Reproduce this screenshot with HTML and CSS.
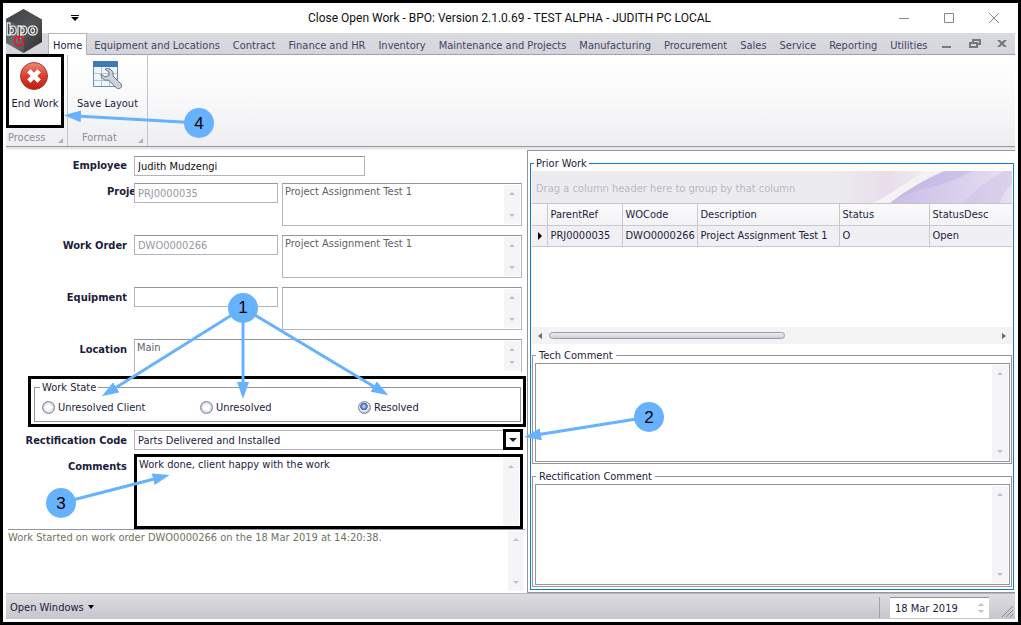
FILE: index.html
```html
<!DOCTYPE html>
<html lang="en">
<head>
<meta charset="utf-8">
<title>Close Open Work</title>
<link rel="stylesheet" href="styles.css">
</head>
<body>
<div class="window">
  <header class="titlebar">
    <button class="quick" aria-label="Customize toolbar"><svg width="8" height="6" viewBox="0 0 8 6"><path d="M0 0h8v1H0zM0 2h8L4 6z"/></svg></button>
    <h1 class="title">Close Open Work - BPO: Version 2.1.0.69 - TEST ALPHA - JUDITH PC LOCAL</h1>
    <div class="caption-buttons">
      <button aria-label="Minimize"><svg width="12" height="12" viewBox="0 0 12 12"><path d="M1 6.500h10"/></svg></button>
      <button aria-label="Maximize"><svg width="12" height="12" viewBox="0 0 12 12"><path d="M1.500 1.500h9v9h-9z"/></svg></button>
      <button aria-label="Close"><svg width="12" height="12" viewBox="0 0 12 12"><path d="M1 1l10 10M11 1L1 11"/></svg></button>
    </div>
  </header>
  <svg class="logo" width="38" height="44" viewBox="0 0 38 44" role="img" aria-label="bpo">
    <defs><linearGradient id="hex" x1="0" y1="0" x2="1" y2="1"><stop offset="0" stop-color="#4a4c4e"/><stop offset=".5" stop-color="#6c6f71"/><stop offset="1" stop-color="#303234"/></linearGradient></defs>
    <path d="M17.500 0L36 10.500V33L17.500 44 0 34V10z" fill="url(#hex)"/>
    <path d="M17.500 0L36 10.500 18 20 0 10z" fill="#2f3133" opacity=".45"/>
    <path d="M18 20v24L36 33V10.500z" fill="#222" opacity=".3"/>
    <text x="0" y="26" class="logo-text">bpo</text>
    <circle cx="13" cy="32" r="4.500" fill="none" stroke="#d3202c" stroke-width="2"/>
    <path d="M13 32v-4" stroke="#d3202c" stroke-width="2"/>
  </svg>
  <nav class="tabs">
    <button class="tab active">Home</button>
    <button class="tab">Equipment and Locations</button>
    <button class="tab">Contract</button>
    <button class="tab">Finance and HR</button>
    <button class="tab">Inventory</button>
    <button class="tab">Maintenance and Projects</button>
    <button class="tab">Manufacturing</button>
    <button class="tab">Procurement</button>
    <button class="tab">Sales</button>
    <button class="tab">Service</button>
    <button class="tab">Reporting</button>
    <button class="tab">Utilities</button>
    <div class="child-buttons">
      <button aria-label="Minimize child"><svg width="12" height="10" viewBox="0 0 12 10"><path d="M1 7h9v2H1z"/></svg></button>
      <button aria-label="Restore child"><svg width="12" height="10" viewBox="0 0 12 10"><path fill-rule="evenodd" d="M3 0h9v6H9v3H0V3h3zM5 2v1h4v1h1V2zM2 5v2h5V5z"/></svg></button>
      <button aria-label="Close child"><svg width="10" height="10" viewBox="0 0 10 10"><path d="M0 1h3l2 2 2-2h3L6.500 4.500 10 8H7L5 6 3 8H0l3.500-3.500z"/></svg></button>
    </div>
  </nav>
  <section class="ribbon">
    <div class="group">
      <button class="command marked">
        <svg width="32" height="32" viewBox="0 0 32 32">
          <defs><linearGradient id="red" x1="0" y1="0" x2="0" y2="1"><stop offset="0" stop-color="#ee8a78"/><stop offset=".5" stop-color="#d9402c"/><stop offset="1" stop-color="#c01c14"/></linearGradient></defs>
          <circle cx="15" cy="16" r="13.500" fill="url(#red)" stroke="#a83a34"/>
          <path d="M11.500 9.500L15 13l3.500-3.500 3 3L18 16l3.500 3.500-3 3L15 19l-3.500 3.500-3-3L12 16l-3.500-3.500z" fill="#fff" stroke="#f6dcd8" stroke-linejoin="round"/>
        </svg>
        <span>End Work</span>
      </button>
      <div class="group-name">Process<svg width="5" height="5" viewBox="0 0 5 5"><path d="M5 0v5H0z"/></svg></div>
    </div>
    <div class="group wide">
      <button class="command">
        <svg width="32" height="32" viewBox="0 0 32 32">
          <path d="M1.500 1.500h24v25h-24z" fill="#eef5fb" stroke="#6d8cab"/>
          <path d="M1 1h25v6H1z" fill="#3e7ab8"/>
          <path d="M2 13.500h23M2 20.500h23M9.500 7v19M17.500 7v19" stroke="#a9c8e4"/>
          <path d="M13 9c5-1.500 9 2 8 7l8 8c2 3-1.500 6-4.500 4l-8-8c-4 1-7.500-1.500-7.500-6l4 3 4-1.500V12z" fill="#cdd3dc" stroke="#667080" stroke-linejoin="round"/>
        </svg>
        <span>Save Layout</span>
      </button>
      <div class="group-name">Format<svg width="5" height="5" viewBox="0 0 5 5"><path d="M5 0v5H0z"/></svg></div>
    </div>
  </section>
  <main class="workspace">
    <form class="form">
      <div class="row short"><label for="emp">Employee</label><input id="emp" class="employee" value="Judith Mudzengi"></div>
      <div class="row"><label for="proj" class="cut">Project</label><input id="proj" class="code" value="PRJ0000035" readonly>
        <div class="memo"><textarea aria-label="Project description" readonly>Project Assignment Test 1</textarea><i class="scroll"></i></div></div>
      <div class="row"><label for="wo">Work Order</label><input id="wo" class="code" value="DWO0000266" readonly>
        <div class="memo"><textarea aria-label="Work order description" readonly>Project Assignment Test 1</textarea><i class="scroll"></i></div></div>
      <div class="row"><label for="eq">Equipment</label><input id="eq" class="code" readonly>
        <div class="memo"><textarea aria-label="Equipment description" readonly></textarea><i class="scroll"></i></div></div>
      <div class="row location"><label for="loc">Location</label>
        <div class="memo"><textarea id="loc" readonly>Main</textarea><i class="scroll"></i></div></div>
      <div class="state-mark">
        <fieldset class="state">
          <legend>Work State</legend>
          <label><input type="radio" name="state">Unresolved Client</label>
          <label><input type="radio" name="state">Unresolved</label>
          <label><input type="radio" name="state" checked>Resolved</label>
        </fieldset>
      </div>
      <div class="row rect"><label for="rc">Rectification Code</label>
        <div class="combo"><select id="rc"><option>Parts Delivered and Installed</option></select><span class="drop"></span></div></div>
      <div class="row comments"><label for="com">Comments</label>
        <div class="memo marked"><textarea id="com">Work done, client happy with the work</textarea><i class="scroll top-only"></i></div></div>
      <div class="log"><p>Work Started on work order DWO0000266 on the 18 Mar 2019 at 14:20:38.</p><i class="scroll"></i></div>
    </form>
    <section class="side">
      <fieldset class="prior">
        <legend>Prior Work</legend>
        <div class="group-panel"><span>Drag a column header here to group by that column</span>
          <svg width="180" height="32" viewBox="0 0 180 32" preserveAspectRatio="none">
            <defs><linearGradient id="pink" x1="0" x2="1"><stop offset="0" stop-color="#ececf0"/><stop offset=".6" stop-color="#e8dde9"/><stop offset="1" stop-color="#ececf0"/></linearGradient>
            <linearGradient id="vio" x1="0" x2="1"><stop offset="0" stop-color="#c9bde6"/><stop offset=".6" stop-color="#d9d1ee"/><stop offset="1" stop-color="#e6e2f0"/></linearGradient></defs>
            <path d="M0 0h92Q70 16 42 32H0z" fill="url(#pink)"/>
            <path d="M92 0h18Q80 14 58 32H42Q70 16 92 0z" fill="#f3f3f5"/>
            <path d="M112 0h68v32H58Q84 12 112 0z" fill="url(#vio)"/>
            <path d="M100 16Q128 8 140 0h-26Q84 12 58 32 78 20 100 16z" fill="#b8a9df" opacity=".35"/>
            <path d="M130 32Q150 12 172 0h8v12Q172 22 168 32z" fill="#cdb9e4" opacity=".4"/>
          </svg>
        </div>
        <div class="grid">
          <table>
            <colgroup><col class="c-ind"><col class="c-code"><col class="c-code"><col class="c-desc"><col class="c-stat"><col></colgroup>
            <thead><tr><th></th><th>ParentRef</th><th>WOCode</th><th>Description</th><th>Status</th><th>StatusDesc</th></tr></thead>
            <tbody><tr><td><svg width="4" height="8" viewBox="0 0 4 8"><path d="M0 0l4 4-4 4z"/></svg></td><td>PRJ0000035</td><td>DWO0000266</td><td>Project Assignment Test 1</td><td>O</td><td>Open</td></tr></tbody>
          </table>
        </div>
        <div class="hscroll"><svg width="4" height="6" viewBox="0 0 4 6"><path d="M4 0v6L0 3z"/></svg><div class="track"><div class="thumb"></div></div><svg width="4" height="6" viewBox="0 0 4 6"><path d="M0 0v6l4-3z"/></svg></div>
        <fieldset class="note"><legend>Tech Comment</legend><div class="memo"><textarea aria-label="Tech Comment"></textarea><i class="scroll"></i></div></fieldset>
        <fieldset class="note"><legend>Rectification Comment</legend><div class="memo"><textarea aria-label="Rectification Comment"></textarea><i class="scroll"></i></div></fieldset>
      </fieldset>
    </section>
  </main>
  <footer class="statusbar">
    <button class="open-windows">Open Windows<svg width="6" height="4" viewBox="0 0 6 4"><path d="M0 0h6L3 4z"/></svg></button>
    <div class="date"><input aria-label="Date" value="18 Mar 2019"><i class="scroll"></i></div>
    <svg class="grip" width="13" height="13" viewBox="0 0 13 13"><path d="M1 12L12 1M5 12l7-7M9 12l3-3" fill="none" stroke="#8c8c94"/></svg>
  </footer>
  <svg class="callouts" width="1021" height="625" viewBox="0 0 1021 625">
    <defs><marker id="head" markerUnits="userSpaceOnUse" markerWidth="17" markerHeight="12" refX="5" refY="6" orient="auto"><path d="M0 0l17 6-17 6z" fill="#66b2ff"/></marker></defs>
    <g stroke="#66b2ff" stroke-width="3" marker-end="url(#head)">
      <path d="M243 308L112 390"/><path d="M243 308V387"/><path d="M243 308L378 389"/>
      <path d="M649 417L536 435"/><path d="M61 503L158 478"/><path d="M199 123L76 116"/>
    </g>
    <g fill="#66b2ff"><circle cx="243" cy="308" r="15"/><circle cx="649" cy="417" r="15"/><circle cx="61" cy="503" r="15"/><circle cx="199" cy="123" r="15"/></g>
    <g class="numbers"><text x="243" y="313">1</text><text x="649" y="423">2</text><text x="61" y="509">3</text><text x="199" y="129">4</text></g>
  </svg>
</div>
</body>
</html>
```
FILE: styles.css
```css
* { box-sizing: border-box; }
body {
  margin: 0;
  font: 11px/15px "DejaVu Sans Condensed", Tahoma, sans-serif;
  color: #1c1c3c;
}
button, input, textarea, select {
  font: inherit;
  color: inherit;
  margin: 0;
  padding: 0;
  border: 0;
  border-radius: 0;
  background: none;
  outline: 0;
}
fieldset { margin: 0; padding: 0; min-width: 0; }
svg { display: block; }

.window {
  position: relative;
  display: flex;
  flex-direction: column;
  min-height: 100vh;
  padding: 0 3px 3px;
  border: 3px solid #000;
  background: #fff;
}

.titlebar { display: flex; align-items: center; height: 30px; }
.quick { margin-left: 65px; }
.title {
  flex: 1;
  margin: 0;
  padding-left: 42px;
  text-align: center;
  font: 12px/18px Roboto, sans-serif;
  color: #111;
}
.caption-buttons { display: flex; gap: 33px; padding-right: 15px; }
.caption-buttons path { fill: none; stroke: #888; }

.logo { position: absolute; left: 3px; top: 6px; }
.logo-text {
  font: bold 15px "DejaVu Sans", sans-serif;
  fill: #333;
  stroke: #fff;
  stroke-width: 1;
}

.tabs {
  display: flex;
  gap: 1px;
  height: 22px;
  padding-left: 42px;
  background: linear-gradient(#dadae1, #d4d4dc);
  border-bottom: 1px solid #a2a2ac;
}
.tab { padding: 3px 6px 0; color: #45455e; white-space: nowrap; }
.tab.active {
  height: 22px;
  padding: 2px 4px 0;
  background: #fff;
  border: 1px solid #b4b4bc;
  border-bottom: 0;
  color: #1c1c3c;
}
.child-buttons {
  display: flex;
  align-items: center;
  gap: 16px;
  margin-left: auto;
  padding-right: 8px;
  fill: #77777f;
}

.ribbon {
  display: flex;
  height: 95px;
  background: linear-gradient(#fff 0, #fafafb 40%, #eeeef2 91px, #9a9a9e 91px, #9a9a9e 92px, #dedee2 92px, #f4f4f4);
}
.group {
  display: flex;
  flex-direction: column;
  width: 62px;
  height: 91px;
  border-right: 1px solid #c4c4cc;
}
.group.wide { width: 80px; }
.command {
  display: flex;
  flex: 1;
  flex-direction: column;
  align-items: center;
  gap: 4px;
  padding-top: 5px;
  white-space: nowrap;
}
.command.marked {
  width: 58px;
  margin-top: -1px;
  padding-top: 3px;
  border: 3px solid #000;
  background: #fff;
}
.group-name {
  display: flex;
  align-items: center;
  justify-content: space-between;
  height: 18px;
  padding: 1px 4px 0 2px;
  color: #8d8d9b;
}
.group-name svg { align-self: flex-end; margin-bottom: 3px; fill: #b0b0b8; }
.wide .group-name { padding-left: 14px; }

.workspace {
  flex: 1;
  display: grid;
  grid-template-columns: 521px 1fr;
}
.form { display: flex; flex-direction: column; padding-top: 6px; }
.row { display: flex; align-items: flex-start; height: 43px; margin-bottom: 9px; }
.row.short { height: 20px; margin-bottom: 7px; }
.row > label {
  width: 128px;
  padding-right: 7px;
  text-align: right;
  font-weight: bold;
  line-height: 21px;
  white-space: nowrap;
}
.row.short > label { line-height: 19px; }
.row > label.cut {
  padding: 0 0 0 101px;
  text-align: left;
  line-height: 17px;
}
.row > input {
  position: relative;
  height: 20px;
  padding: 1px 3px 0;
  background: #fff;
  border: 1px solid #b4b4bc;
  border-top-color: #94949c;
}
.employee { width: 231px; color: #111; }
.code { width: 144px; margin-right: 4px; color: #9797a0; }

.memo {
  position: relative;
  display: flex;
  flex: 1;
  height: 100%;
  margin-right: 5px;
  border: 1px solid #b4b4bc;
  border-top-color: #94949c;
}
.memo textarea {
  flex: 1;
  min-width: 0;
  padding: 0 2px;
  resize: none;
  overflow: hidden;
  color: #5f5f66;
}
.scroll {
  display: flex;
  flex-direction: column;
  justify-content: space-between;
  align-items: center;
  width: 16px;
  padding: 7px 0;
  margin: 1px;
  background: #f5f5f8;
}
.scroll::before, .scroll::after {
  content: "";
  border: 3px solid transparent;
  border-top-width: 0;
  border-bottom: 3px solid #c0c0c8;
}
.scroll::after {
  border-top: 3px solid #c0c0c8;
  border-bottom-width: 0;
}
.scroll.top-only::after { display: none; }

.location { height: 33px; margin-bottom: 4px; }
.location .memo { border-bottom: 0; }

.state-mark {
  width: 498px;
  height: 51px;
  margin: 0 0 3px 22px;
  padding: 1px 2px 3px 3px;
  border: 3px solid #000;
}
.state {
  height: 42px;
  display: grid;
  grid-template-columns: 158px 158px 1fr;
  align-items: center;
  padding: 0 0 2px 7px;
  border: 1px solid #94949c;
}
.state legend { margin-left: -2px; padding: 0 2px; }
.state label { display: flex; align-items: center; gap: 3px; }
.state input {
  appearance: none;
  width: 13px;
  height: 13px;
  border: 1px solid #85858d;
  border-radius: 50%;
  background: radial-gradient(#fff 35%, #c4c4d0 75%);
}
.state input:checked {
  background: radial-gradient(circle at 45% 40%, #b4ccf4 8%, #3a5cae 38%, #eef 46%, #b8b8c8 75%);
}

.row.rect { height: 20px; margin-bottom: 4px; }
.combo { position: relative; flex: 1; height: 20px; margin-right: 5px; border: 1px solid #b4b4bc; }
.combo select { appearance: none; width: 100%; height: 18px; padding: 1px 3px 0; }
.drop {
  position: absolute;
  right: -2px;
  top: -2px;
  width: 20px;
  height: 21px;
  display: grid;
  place-items: center;
  border: 3px solid #000;
  background: #fff;
  pointer-events: none;
}
.drop::after {
  content: "";
  border: 4px solid transparent;
  border-top: 4px solid #222;
  border-bottom: 0;
}
.row.comments { height: 75px; margin: 0; }
.row.comments > label { line-height: 25px; }
.memo.marked { margin-right: 4px; border: 3px solid #000; }
.memo.marked textarea { padding: 0 2px; color: #1c1c3c; }
.log {
  display: flex;
  flex: 1;
  margin: 0 2px 1px;
  border-top: 1px solid #94949c;
}
.log p { flex: 1; margin: 0; color: #6d7564; white-space: nowrap; }

.side {
  display: flex;
  padding: 5px 1px 2px 2px;
  border: 1px solid #94949c;
  border-right: 0;
}
.prior {
  flex: 1;
  display: flex;
  flex-direction: column;
  padding: 0 1px 2px;
  border: 1px solid #1677d2;
}
.prior > legend { margin-left: 2px; padding: 0 2px; }
.group-panel {
  display: flex;
  align-items: center;
  justify-content: space-between;
  height: 33px;
  background: #ececf0;
  border-bottom: 1px solid #c4c4cc;
}
.group-panel span { padding: 2px 0 0 4px; color: #b9b9c1; white-space: nowrap; }
.group-panel svg { flex: 1; max-width: 180px; }
.grid { height: 123px; }
table { width: 100%; border-collapse: collapse; table-layout: fixed; }
th, td {
  height: 21px;
  padding: 0 0 0 3px;
  text-align: left;
  font-weight: normal;
  white-space: nowrap;
  border-right: 1px solid #c8c8d0;
  border-bottom: 1px solid #c8c8d0;
}
th { background: linear-gradient(#fafafc, #f3f3f6); }
td { background: #f0f0f4; }
th:last-child, td:last-child { border-right: 0; }
td:first-child { padding-left: 6px; }
.c-ind { width: 15px; }
.c-code { width: 75px; }
.c-desc { width: 142px; }
.c-stat { width: 90px; }
.hscroll {
  display: flex;
  align-items: center;
  gap: 7px;
  height: 17px;
  padding: 0 6px;
  margin-bottom: 4px;
  background: #f3f3f6;
  fill: #6a6a74;
}
.track { flex: 1; }
.thumb {
  width: 53%;
  height: 7px;
  border: 1px solid #9c9ca6;
  border-radius: 4px;
  background: linear-gradient(#ececf0, #cfcfd8);
}
.note {
  flex: 117 1 0;
  display: flex;
  padding: 0 1px 1px 2px;
  border: 1px solid #94949c;
}
.note + .note { flex-grow: 119; margin-top: 5px; }
.note legend { margin-left: 1px; padding: 0 3px; }
.note .memo { height: auto; margin: 0; border: 1px solid #94949c; }

.statusbar {
  display: flex;
  align-items: center;
  height: 26px;
  padding: 1px 1px 0 4px;
  background: linear-gradient(#dcdce1, #c6c6cc);
  border-top: 1px solid #b8b8c0;
}
.open-windows { display: flex; align-items: center; gap: 4px; }
.date {
  display: flex;
  width: 110px;
  height: 21px;
  margin-left: auto;
  padding-left: 10px;
  border-left: 1px solid #a2a2aa;
}
.date input { width: 83px; padding: 1px 5px 0; background: #fff; border-top: 1px solid #94949c; }
.date .scroll { margin: 0; padding: 5px 0; background: #fff; border-top: 1px solid #94949c; }
.grip { margin: 8px 0 0 12px; }

.callouts { position: absolute; left: -3px; top: -3px; pointer-events: none; }
.numbers { font: 17px "Liberation Sans", Arial, sans-serif; text-anchor: middle; fill: #000; }
```
